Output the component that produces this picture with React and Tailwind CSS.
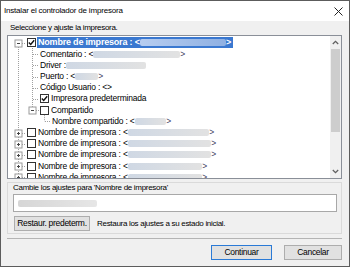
import React from "react";

const font = { fontFamily: '"Liberation Sans", Arial, sans-serif' };

// redacted value in the tree (blurred bar), stretches to fill the row's value slot
const Blur = ({ sel, w }) => (
  <span
    className={`inline-block h-[7px] rounded-[2px] blur-[0.6px] ${w ? "" : "flex-1"} ${
      sel ? "bg-gradient-to-r from-[#b7cdf0] to-[#8fb0e2]" : "bg-gradient-to-r from-[#cfd8e4] to-[#e2e2e2]"
    }`}
    style={w ? { width: w } : undefined}
  />
);

const Check = ({ checked }) => (
  <span className="w-[9px] h-[9px] border border-[#333] bg-white flex items-center justify-center shrink-0">
    {checked && (
      <svg width="7" height="7" viewBox="0 0 7 7">
        <path d="M0.8 3.6 L2.7 5.5 L6.2 1.2" fill="none" stroke="#111" strokeWidth="1.4" />
      </svg>
    )}
  </span>
);

// span = width from text start to the closing ">"
const rows = [
  { lvl: 0, sel: true, label: "Nombre de impresora : <", span: 196, close: true },
  { lvl: 1, label: "Comentario : <", span: 145, close: true },
  { lvl: 1, label: "Driver : ", blurW: 80 },
  { lvl: 1, label: "Puerto : <", span: 63, close: true },
  { lvl: 1, label: "Código Usuario : <>" },
  { lvl: 1, check: true, checked: true, label: "Impresora predeterminada" },
  { lvl: 1, check: true, label: "Compartido" },
  { lvl: 2, label: "Nombre compartido : <", span: 119, close: true },
  { lvl: 0, label: "Nombre de impresora : <", span: 176, close: true },
  { lvl: 0, label: "Nombre de impresora : <", span: 178, close: true },
  { lvl: 0, label: "Nombre de impresora : <", span: 178, close: true },
  { lvl: 0, label: "Nombre de impresora : <", span: 169, close: true },
  { lvl: 0, label: "Nombre de impresora : <", span: 169, close: true },
];

const RH = 11.2;
const yc = (i) => 7 + RH * i;

const Expander = ({ x, y, plus }) => (
  <g>
    <rect x={x - 3.5} y={y - 3.5} width="7" height="7" fill="#fff" stroke="#9a9a9a" />
    <line x1={x - 1.5} y1={y} x2={x + 1.5} y2={y} stroke="#444" />
    {plus && <line x1={x} y1={y - 1.5} x2={x} y2={y + 1.5} stroke="#444" />}
  </g>
);

const TreeLines = () => {
  const dot = { stroke: "#a0a0a0", strokeDasharray: "1 1", strokeWidth: 1 };
  const r = (i) => Math.round(yc(i)) + 0.5;
  return (
    <svg className="absolute left-0 top-0" width="322" height="142">
      <line x1="10.5" y1={yc(0) + 4} x2="10.5" y2="142" {...dot} />
      <line x1="24.5" y1={yc(0) + 5} x2="24.5" y2={yc(6)} {...dot} />
      <line x1="36.5" y1={yc(6) + 5} x2="36.5" y2={yc(7)} {...dot} />
      {[1, 2, 3, 4, 5].map((i) => (
        <line key={i} x1="25" y1={r(i)} x2="31" y2={r(i)} {...dot} />
      ))}
      <line x1="28" y1={r(6)} x2="31" y2={r(6)} {...dot} />
      <line x1="37" y1={r(7)} x2="43" y2={r(7)} {...dot} />
      {[0, 8, 9, 10, 11, 12].map((i) => (
        <line key={i} x1="14" y1={r(i)} x2="18" y2={r(i)} {...dot} />
      ))}
      {[0, 8, 9, 10, 11, 12].map((i) => (
        <Expander key={i} x={10.5} y={r(i)} plus={i !== 0} />
      ))}
      <Expander x={24.5} y={r(6)} />
    </svg>
  );
};

const Row = ({ r }) => {
  const ml = r.lvl === 0 ? 19 : r.lvl === 1 ? 32 : 44;
  return (
    <div className="h-[11.2px] flex items-center whitespace-nowrap" style={{ marginLeft: ml }}>
      {r.lvl === 0 && <Check checked={r.sel} />}
      {r.lvl === 1 && r.check && <Check checked={r.checked} />}
      <span
        className={`flex items-center h-[11px] leading-[11px] ${
          r.sel
            ? "bg-[#3a78d0] text-white font-bold text-[9px] tracking-[-0.2px] pl-[1px] pr-[2px] ml-[1px]"
            : r.check || r.lvl === 0
            ? "ml-[2px]"
            : ""
        }`}
        style={r.span ? { width: r.span } : undefined}
      >
        <span>{r.label}</span>
        {r.span && <Blur sel={r.sel} />}
        {r.blurW && <Blur w={r.blurW} />}
        {r.close && <span className={r.sel ? "text-white" : "text-[#403c5c]"}>&gt;</span>}
      </span>
    </div>
  );
};

const Btn = ({ children, def, w }) => (
  <button
    className={`h-[15px] text-[8.5px] tracking-[-0.3px] leading-[13px] whitespace-nowrap bg-[#e1e1e1] border ${
      def ? "border-[#2a7ad6]" : "border-[#adadad]"
    } text-black`}
    style={{ width: w }}
  >
    {children}
  </button>
);

export default function App() {
  return (
    <div
      className="w-[350px] h-[267px] bg-[#f0f0f0] border border-[#5c5c5c] flex flex-col text-black text-[8px] tracking-[-0.3px]"
      style={font}
    >
      <div className="h-[20px] bg-white flex items-center justify-between pl-[3px] pr-[6px] shrink-0">
        <span className="text-[8px] tracking-[-0.2px] leading-[12px]">Instalar el controlador de impresora</span>
        <svg width="9" height="9" viewBox="0 0 9 9">
          <path d="M0.5 0.5 L8.5 8.5 M8.5 0.5 L0.5 8.5" stroke="#222" strokeWidth="1" />
        </svg>
      </div>

      <div className="pl-[9px] h-[11px] leading-[11px] mt-[1px]">Seleccione y ajuste la impresora.</div>

      <div className="ml-[6px] mt-[2px] w-[335px] h-[144px] border border-[#8a8f98] bg-white flex shrink-0">
        <div className="relative flex-1 overflow-hidden pt-[1.4px] text-[8.5px] tracking-[-0.2px]">
          <TreeLines />
          <div className="relative">
            {rows.map((r, i) => (
              <Row key={i} r={r} />
            ))}
          </div>
        </div>
        <div className="w-[11px] bg-[#f0f0f0] flex flex-col items-center">
          <div className="h-[13px] flex items-center justify-center">
            <svg width="7" height="5" viewBox="0 0 7 5">
              <path d="M0.8 4 L3.5 1.3 L6.2 4" fill="none" stroke="#606060" strokeWidth="1.3" />
            </svg>
          </div>
          <div className="w-[9px] h-[83px] bg-[#cdcdcd]" />
          <div className="flex-1" />
          <div className="h-[13px] flex items-center justify-center">
            <svg width="7" height="5" viewBox="0 0 7 5">
              <path d="M0.8 1 L3.5 3.7 L6.2 1" fill="none" stroke="#606060" strokeWidth="1.3" />
            </svg>
          </div>
        </div>
      </div>

      <div className="ml-[6px] mt-[3px] w-[335px] h-[52px] border border-[#dadada] shrink-0">
        <div className="pl-[5px] h-[10px] leading-[10px]">Cambie los ajustes para 'Nombre de impresora'</div>
        <div className="ml-[5px] mt-[1px] w-[324px] h-[18px] border border-[#a8a8a8] bg-white flex items-center pl-[4px]">
          <span className="inline-block w-[79px] h-[7px] rounded-[2px] bg-gradient-to-r from-[#d6d6d6] to-[#e6e6e6] blur-[0.6px]" />
        </div>
        <div className="ml-[6px] mt-[4px] flex items-center gap-[7px]">
          <Btn w={76}>Restaur. predeterm.</Btn>
          <span className="whitespace-nowrap">Restaura los ajustes a su estado inicial.</span>
        </div>
      </div>

      <div className="ml-[6px] mt-[4px] w-[335px] h-px bg-[#b4b4b4] shrink-0" />

      <div className="mt-[6px] mr-[7px] flex justify-end gap-[12px]">
        <Btn def w={61}>Continuar</Btn>
        <Btn w={58}>Cancelar</Btn>
      </div>
    </div>
  );
}
